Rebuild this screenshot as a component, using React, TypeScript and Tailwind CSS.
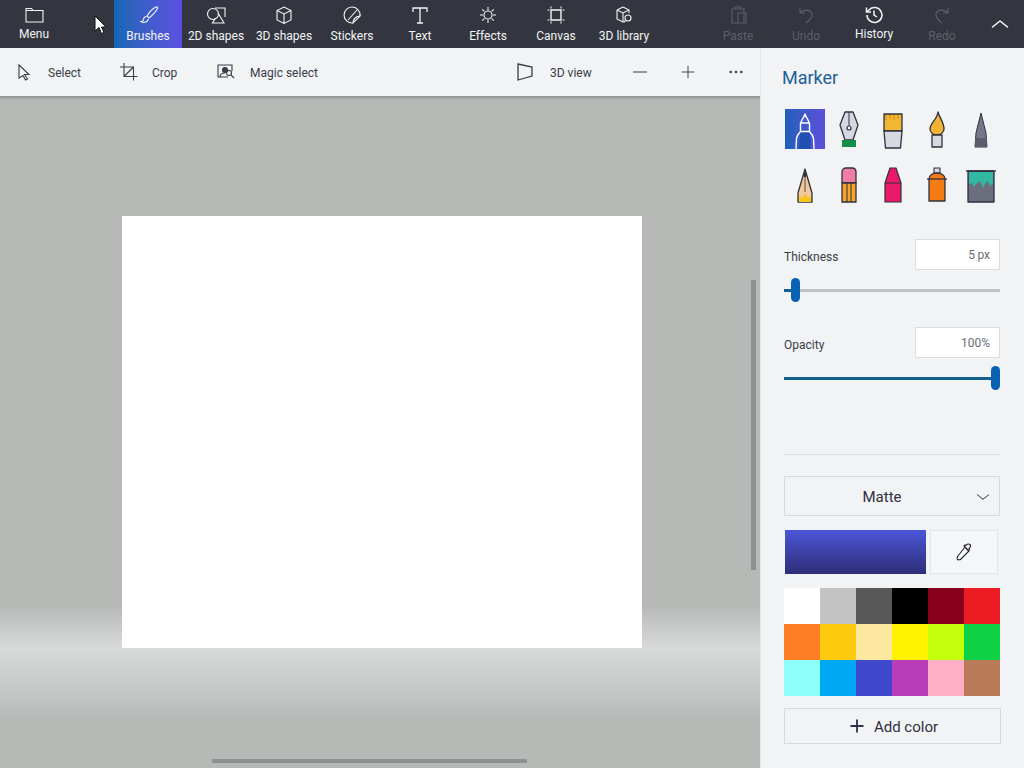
import { ChevronDown, ChevronUp, Minus, MoreHorizontal, Plus } from "lucide-react";
import type { ReactNode } from "react";

const palette = [
  "#ffffff", "#c3c3c3", "#585858", "#000000", "#88001b", "#ec1c24",
  "#ff7f27", "#ffc90e", "#fde8a0", "#fff200", "#c4ff0e", "#0ed145",
  "#8cfffb", "#00a8f3", "#3f48cc", "#b83dba", "#ffaec8", "#b97a57",
];

const DARK = "#2f3040";

function Glyph({ children }: { children: ReactNode }) {
  return (
    <svg width="24" height="24" viewBox="0 0 24 24" fill="none" stroke="currentColor" strokeWidth="1.1">
      {children}
    </svg>
  );
}

function RibbonItem({
  label,
  icon,
  high,
  dim,
  active,
}: {
  label: string;
  icon: ReactNode;
  high?: boolean;
  dim?: boolean;
  active?: boolean;
}) {
  return (
    <div
      className={`w-[68px] h-12 flex flex-col items-center shrink-0 pt-[3px] ${
        dim ? "text-[#5c5f67]" : "text-[#f2f3f5]"
      } ${active ? "bg-gradient-to-r from-[#0f66b5] to-[#5a50e2] text-[#dbe9fb]" : ""}`}
    >
      {icon}
      <span className={`text-[12px] leading-4 whitespace-nowrap ${high ? "-mt-[1px]" : "mt-[1px]"}`}>{label}</span>
    </div>
  );
}

function ToolIcon({ children }: { children: ReactNode }) {
  return (
    <svg width="20" height="20" viewBox="0 0 20 20" fill="none" stroke="#3a3c48" strokeWidth="1.1" className="shrink-0">
      {children}
    </svg>
  );
}

function Brush({ children, selected }: { children: ReactNode; selected?: boolean }) {
  return (
    <div
      className={`w-10 h-10 ${selected ? "bg-gradient-to-r from-[#1c5fbc] to-[#5a4fd8]" : ""}`}
    >
      <svg width="40" height="40" viewBox="0 0 40 40" strokeLinejoin="round">
        {children}
      </svg>
    </div>
  );
}

function SliderRow({ label, value, percent }: { label: string; value: string; percent: number }) {
  return (
    <div className="flex flex-col">
      <div className="flex items-center justify-between h-[31px]">
        <span className="text-[12px] text-[#3a3c48] mt-[4px]">{label}</span>
        <div className="w-[85px] h-[31px] bg-white border border-[#dcdde0] flex items-center justify-end pr-[9px] text-[12px] text-[#6b6d74]">
          {value}
        </div>
      </div>
      <div className="relative h-[24px] mt-[8px] flex items-center">
        <div className="w-full h-[3px] bg-[#bfc0c2]" />
        <div
          className="absolute left-0 h-[3px] bg-[#14608c]"
          style={{ width: `${percent}%` }}
        />
        <div
          className="absolute w-[9px] h-[24px] rounded-full bg-[#0a62b4]"
          style={{ left: `calc(${percent}% - ${percent > 50 ? 9 : 4}px)` }}
        />
      </div>
    </div>
  );
}

export default function App() {
  return (
    <div className="relative w-[1024px] h-[768px] overflow-hidden flex flex-col bg-[#f1f3f5] font-['Roboto','Noto_Sans',sans-serif]">
      {/* top ribbon */}
      <div className="h-12 shrink-0 flex bg-[#33363e]">
        <RibbonItem
          label="Menu"
          high
          icon={
            <Glyph>
              <path d="M4 7.5V19h17V7.5H11L9.5 5.5H4v2h7" />
            </Glyph>
          }
        />
        <div className="w-[46px] shrink-0" />
        <RibbonItem
          label="Brushes"
          active
          icon={
            <Glyph>
              <path d="M20 4c-3 1.5-7 5.5-9 9l2 2c3-2.5 7-6.500 8.500-9.500C22 4.500 21 3.500 20 4Z" />
              <path d="M10.500 13.500c-2.500 0-3 2-3.200 3.500-.1 1-1.300 1.500-2.300 1.500 2 1.500 6 1.500 7.500-2.500" />
            </Glyph>
          }
        />
        <RibbonItem
          label="2D shapes"
          icon={
            <Glyph>
              <circle cx="9" cy="11" r="5.500" />
              <path d="M11 5h10v9M14 10l6 10H8.500l3-5" />
            </Glyph>
          }
        />
        <RibbonItem
          label="3D shapes"
          icon={
            <Glyph>
              <path d="M12 4l7 3.500v9.500l-7 3.500-7-3.500V7.500L12 4ZM5 7.500l7 3.500 7-3.500M12 11v9.500" />
            </Glyph>
          }
        />
        <RibbonItem
          label="Stickers"
          icon={
            <Glyph>
              <path d="M20 13a8 8 0 1 0-7 7" />
              <path d="M20 13l-7 7c0-4 3-7 7-7ZM8 17l9-10" />
            </Glyph>
          }
        />
        <RibbonItem
          label="Text"
          icon={
            <svg width="24" height="24" viewBox="0 0 24 24" fill="none" stroke="currentColor" strokeWidth="1.300">
              <path d="M5 9V5h14v4M12 5v15M9 20h6" />
            </svg>
          }
        />
        <RibbonItem
          label="Effects"
          icon={
            <Glyph>
              <circle cx="12" cy="12" r="4" />
              <path d="M12 4v3M12 17v3M4 12h3M17 12h3M6.300 6.300l2 2M15.700 15.700l2 2M17.700 6.300l-2 2M8.300 15.700l-2 2" />
            </Glyph>
          }
        />
        <RibbonItem
          label="Canvas"
          icon={
            <Glyph>
              <path d="M7 7h10v10H7Z" strokeWidth="1.400" />
              <path d="M7 3.500v2M17 3.500v2M7 18.500v2M17 18.500v2M3.500 7h2M3.500 17h2M18.500 7h2M18.500 17h2" />
            </Glyph>
          }
        />
        <RibbonItem
          label="3D library"
          icon={
            <Glyph>
              <path d="M11 4l6 3v3M5 7l6-3M5 7v9l6 3M5 7l6 3 6-3M11 10v9" />
              <circle cx="16" cy="15" r="3" />
              <path d="M13.500 17.500l-2 2" />
            </Glyph>
          }
        />
        <div className="w-[46px] shrink-0" />
        <RibbonItem
          label="Paste"
          dim
          icon={
            <Glyph>
              <path d="M6 6h12v14H6ZM9 6V4h6v2M12 10h8v10h-8Z" />
            </Glyph>
          }
        />
        <RibbonItem
          label="Undo"
          dim
          icon={
            <Glyph>
              <path d="M6 5v5h5M6 10c3-4 11-4 12 1 .5 3-2 6-6 9" />
            </Glyph>
          }
        />
        <RibbonItem
          label="History"
          high
          icon={
            <svg width="24" height="24" viewBox="0 0 24 24" fill="none" stroke="currentColor" strokeWidth="1.500">
              <path d="M5 12a7.500 7.500 0 1 0 2.200-5.300L4.500 9M4.500 4.500V9H9M12 7.500V12l3 2" />
            </svg>
          }
        />
        <RibbonItem
          label="Redo"
          dim
          icon={
            <Glyph>
              <path d="M18 5v5h-5M18 10c-3-4-11-4-12 1-.5 3 2 6 6 9" />
            </Glyph>
          }
        />
        <div className="w-12 shrink-0 flex items-center justify-center text-[#f2f3f5]">
          <ChevronUp size={24} strokeWidth={1.2} className="scale-x-125" />
        </div>
      </div>

      <div className="flex flex-1 min-h-0">
        {/* left column */}
        <div className="w-[760px] shrink-0 flex flex-col">
          <div className="h-12 shrink-0 flex items-center pl-[14px] text-[12px] text-[#3a3c48] whitespace-nowrap">
            <div className="w-[104px] shrink-0 flex items-center gap-[14px]">
              <ToolIcon>
                <path d="M5 3l10 9.500h-4.500l3 4.500-2 1-2.500-4.500L5 16Z" />
              </ToolIcon>
              <span className="pt-px">Select</span>
            </div>
            <div className="w-[98px] shrink-0 flex items-center gap-[14px]">
              <ToolIcon>
                <path d="M2 5h13.500v13.500M6 1v13.500h13.500M6 14.500l9.500-9.500" />
              </ToolIcon>
              <span className="pt-px">Crop</span>
            </div>
            <div className="w-[300px] shrink-0 flex items-center gap-[14px]">
              <ToolIcon>
                <path d="M12 15H2V3h14v6" />
                <circle cx="9" cy="8" r="2.500" fill="#3a3c48" />
                <path d="M4 15c0-3 3-4 5-4" />
                <circle cx="13" cy="11" r="2.500" />
                <path d="M15 13l3 3" />
              </ToolIcon>
              <span className="pt-px">Magic select</span>
            </div>
            <div className="w-[115px] shrink-0 flex items-center gap-[14px]">
              <ToolIcon>
                <path d="M2 2l14 3v9L2 18Z" strokeWidth="1.300" />
              </ToolIcon>
              <span className="pt-px">3D view</span>
            </div>
            <div className="w-[47px] shrink-0">
              <Minus size={18} strokeWidth={1.100} className="text-[#3a3c48] scale-x-125" />
            </div>
            <div className="w-[49px] shrink-0">
              <Plus size={20} strokeWidth={1.100} className="text-[#3a3c48]" />
            </div>
            <MoreHorizontal size={18} strokeWidth={1.500} className="text-[#3a3c48]" />
          </div>

          <div className="relative flex-1 pl-[122px] pt-[120px] bg-[linear-gradient(to_bottom,#b7b9b7_0%,#b7b9b7_76%,#d8dad9_82%,#c9cccb_87%,#b7b9b7_93%,#b7b9b7_100%)]">
            <div className="absolute top-0 left-0 right-0 h-[4px] bg-gradient-to-b from-[#8f9191] to-transparent" />
            <div className="w-[520px] h-[432px] bg-white" />
            {/* scrollbars */}
            <div className="absolute left-[751px] top-[184px] w-[5px] h-[290px] bg-[#8f9090]" />
            <div className="absolute left-[212px] top-[663px] w-[315px] h-[4px] bg-[#8f9090]" />
          </div>
        </div>

        {/* side panel */}
        <div className="w-[264px] shrink-0 flex flex-col pl-[23px] pr-[24px] border-l border-[#e4e6e8]">
          <div className="text-[18px] leading-6 text-[#1e5f99] mt-[18px] mb-[-1px] -ml-[2px]">Marker</div>

          <div className="grid grid-cols-[repeat(5,40px)] gap-x-[4px] gap-y-[16px] mt-[20px] ml-px">
            <Brush selected>
              <path d="M14 40V40l1-13c.2-2 1-3 1-4.500h8c0 1.500.8 2.500 1 4.500l1 13Z" fill="#1f4fb0" />
              <path d="M16 14c0-3 3-5 4-9 1 4 4 6 4 9M15.500 14h9v8.500h-9ZM15.500 22.500c-2 2-3.500 4-4 7L11 40M24.500 22.500c2 2 3.500 4 4 7L29 40" fill="none" stroke="#fff" strokeWidth="1.400" />
            </Brush>
            <Brush>
              <path d="M16 3h8l5 13-1 3-4 12h-8l-4-12-1-3Z" fill="#d6d7e2" stroke={DARK} strokeWidth="1.300" />
              <path d="M20 3v14" stroke={DARK} strokeWidth="1" />
              <circle cx="20" cy="19" r="2" fill="#fff" stroke={DARK} strokeWidth="1.200" />
              <rect x="13" y="31" width="14" height="7" fill="#0f8f48" />
            </Brush>
            <Brush>
              <path d="M11 5h18v17H11Z" fill="#f2b632" stroke={DARK} strokeWidth="1.300" />
              <path d="M13 6v5M17 6v4M21 6v5M25 6v4" stroke="#c98a20" strokeWidth="1" />
              <path d="M11 22h18l-1.500 17h-15Z" fill="#d8d8e0" stroke={DARK} strokeWidth="1.300" />
            </Brush>
            <Brush>
              <path d="M21 3c1 5 6 10 6 17 0 3-3 6-7 6s-7-3-7-6c0-6 7-9 8-17Z" fill="#f3b233" stroke={DARK} strokeWidth="1.300" />
              <path d="M15 26h10v12H15Z" fill="#d8d8e0" stroke={DARK} strokeWidth="1.300" />
            </Brush>
            <Brush>
              <path d="M20 4l5 20 1 14H14l1-14Z" fill="#74768a" stroke={DARK} strokeWidth="1" />
              <rect x="14" y="29" width="12" height="9" fill="#5b5d6b" />
            </Brush>

            <Brush>
              <path d="M20 4l7 24v9H13v-9Z" fill="#f2c79c" stroke={DARK} strokeWidth="1.300" />
              <path d="M18.500 11l1.500-7 1.500 7-1.500 2Z" fill={DARK} />
              <path d="M20 13v14" stroke={DARK} strokeWidth="0.800" />
              <path d="M14 37v-6l3 2 3-4 3 4 3-2v6Z" fill="#f5c518" />
            </Brush>
            <Brush>
              <path d="M13 18V7c0-3 2-4 4-4h6c2 0 4 1 4 4v11Z" fill="#ef7ea3" stroke={DARK} strokeWidth="1.300" />
              <path d="M13 18h14v19H13Z" fill="#f6a32b" stroke={DARK} strokeWidth="1.300" />
              <path d="M18 18v19M22 18v19" stroke={DARK} strokeWidth="1" />
            </Brush>
            <Brush>
              <path d="M12 18l5-15h6l5 15v19H12Z" fill="#ea1a6a" stroke={DARK} strokeWidth="1.200" />
              <path d="M12 18h16" stroke={DARK} strokeWidth="1" />
            </Brush>
            <Brush>
              <path d="M17 3h6v5h-6Z" fill="#d8d8e0" stroke={DARK} strokeWidth="1.100" />
              <path d="M12 14c0-4 4-6 8-6s8 2 8 6v22H12Z" fill="#f57c14" stroke={DARK} strokeWidth="1.300" />
              <path d="M10 14h20" stroke={DARK} strokeWidth="1.300" />
            </Brush>
            <Brush>
              <path d="M7 6h26v31H7Z" fill="#6b6e7c" stroke={DARK} strokeWidth="1.300" />
              <path d="M8 7h24v11l-3 3-2-5-3 3-2 4-3-7-4 3-2 3-2-4-3 1Z" fill="#30b8a2" />
              <path d="M5 6h30" stroke={DARK} strokeWidth="1.300" />
            </Brush>
          </div>

          <div className="mt-[34px] flex flex-col gap-[25px]">
            <SliderRow label="Thickness" value={"5\u2009px"} percent={5} />
            <SliderRow label="Opacity" value="100%" percent={100} />
          </div>

          <div className="h-px bg-[#dfe0e3] mt-[64px]" />

          <div className="relative h-[40px] mt-[21px] border border-[#d8d9dc] flex items-center justify-center pt-[2px] pr-[20px] text-[15px] text-[#2f3040]">
            Matte
            <ChevronDown size={18} strokeWidth={1.100} className="absolute right-[7px] text-[#3a3c48] scale-x-125" />
          </div>

          <div className="flex mt-[14px] ml-px">
            <div className="w-[141px] h-[44px] bg-gradient-to-b from-[#4a56d8] to-[#2e2e78]" />
            <div className="w-[68px] h-[44px] ml-[4px] bg-[#f5f6f8] border border-[#e4e5e8] flex items-center justify-center">
              <svg width="20" height="20" viewBox="0 0 20 20" fill="none" stroke="#26262e" strokeWidth="1.100">
                <path d="M11 5l4 4-8 8c-1 1-3 1-3.500.5S3 15 4 14ZM12 3.500c1-1.500 3-2 4-1s.5 3-1 4l.5 1-1.500 1L10 4l1-1Z" />
              </svg>
            </div>
          </div>

          <div className="grid grid-cols-[repeat(6,36px)] auto-rows-[36px] mt-[14px]">
            {palette.map((color) => (
              <div key={color} className="w-9 h-9" style={{ backgroundColor: color }} />
            ))}
          </div>

          <div className="h-[36px] w-[217px] mt-[12px] border border-[#d8d9dc] flex items-center justify-center gap-[7px] pt-[2px] text-[15px] text-[#2f3040]">
            <Plus size={20} strokeWidth={2.200} className="text-[#2f3050] -mt-[2px]" />
            <span>Add color</span>
          </div>
        </div>
      </div>

      {/* mouse pointer */}
      <svg className="absolute left-[94px] top-[15px]" width="14" height="21" viewBox="0 0 14 21">
        <path d="M1 1v15l4-3.500 2.500 6 2.500-1-2.500-5.500H12Z" fill="#fff" stroke="#111" strokeWidth="1" />
      </svg>
    </div>
  );
}
